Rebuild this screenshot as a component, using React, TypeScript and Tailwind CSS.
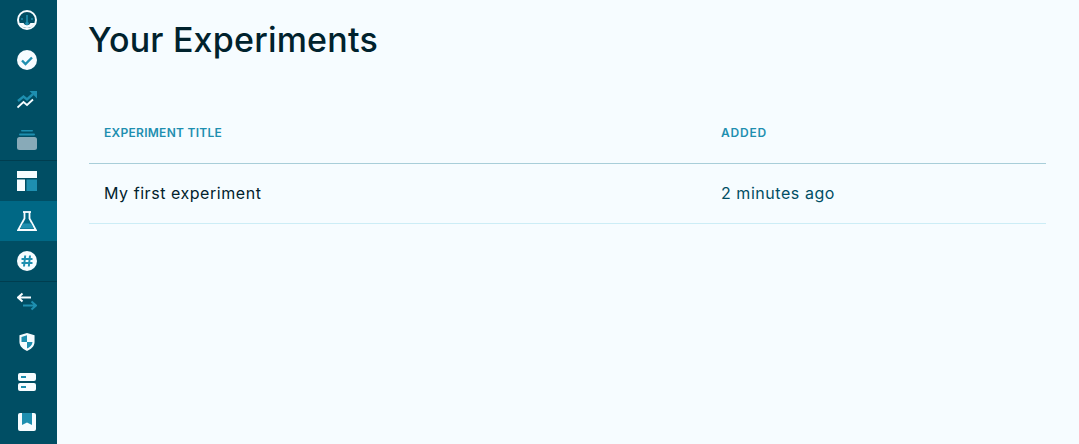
import type { ReactNode } from 'react';

const WHITE = '#f6fcff';
const BLUE = '#1e8fb0';

const icons: ReactNode[] = [
    <svg key="gauge" width="20" height="20" viewBox="0 0 20 20">
        <circle cx="10" cy="10" r="9" fill="none" stroke={WHITE} strokeWidth="2" />
        <path d="M2 13 H6.500 a3.800 3.800 0 0 0 7 0 H18 A9 9 0 0 1 2 13z" fill={WHITE} />
        <rect x="9.200" y="5" width="1.600" height="8" fill={BLUE} />
        <circle cx="10" cy="13.500" r="1.800" fill={BLUE} />
        <circle cx="5" cy="9" r="0.900" fill={BLUE} />
        <circle cx="15" cy="9" r="0.900" fill={BLUE} />
    </svg>,
    <svg key="check" width="20" height="20" viewBox="0 0 20 20">
        <circle cx="10" cy="10" r="10" fill={WHITE} />
        <path d="M5 10.500 8.500 14 15 7.500" fill="none" stroke={BLUE} strokeWidth="2.400" />
    </svg>,
    <svg key="trend" width="20" height="18" viewBox="0 0 20 18">
        <path d="M1 10 6.500 5.500 10 8.500 16 3" fill="none" stroke={BLUE} strokeWidth="2.400" />
        <path d="M12.500 0 H20 V7.500z" fill={BLUE} />
        <path d="M0.500 16.500 6.500 11 10 14 16 8.500" fill="none" stroke={WHITE} strokeWidth="1.800" />
    </svg>,
    <svg key="stack" width="20" height="20" viewBox="0 0 20 20">
        <rect x="4" y="0" width="12" height="1.500" rx="0.750" fill={BLUE} />
        <rect x="2" y="3.500" width="16" height="2" rx="1" fill={BLUE} />
        <rect x="0" y="7" width="20" height="13" rx="2.500" fill="#88aab8" />
    </svg>,
    <svg key="layout" width="20" height="20" viewBox="0 0 20 20">
        <rect width="20" height="7" fill={WHITE} />
        <rect y="8.500" width="8" height="11.500" fill={WHITE} />
        <rect x="9.500" y="8.500" width="10.500" height="11.500" fill={BLUE} />
    </svg>,
    <svg key="flask" width="20" height="20" viewBox="0 0 20 20">
        <path d="M6 1 H14" stroke={WHITE} strokeWidth="1.800" />
        <path d="M7.500 1 V7.500 L1.200 19 H18.800 L12.500 7.500 V1" fill="none" stroke={WHITE} strokeWidth="1.800" />
        <path d="M5.500 12.500 H14.500 L16.500 17.500 H3.500z" fill={BLUE} />
    </svg>,
    <svg key="hash" width="20" height="20" viewBox="0 0 20 20">
        <circle cx="10" cy="10" r="10" fill={WHITE} />
        <path d="M8.200 4.500 7 15.500 M13 4.500 11.800 15.500 M4.500 8 H15.500 M4.500 12 H15.500" fill="none" stroke={BLUE} strokeWidth="2" />
    </svg>,
    <svg key="arrows" width="20" height="20" viewBox="0 0 20 20">
        <path d="M1 5.500 H14 M5.500 1.500 1 5.500 5.500 9.500" fill="none" stroke={WHITE} strokeWidth="2" />
        <path d="M6 13.500 H19 M14.500 9.500 19 13.500 14.500 17.500" fill="none" stroke={BLUE} strokeWidth="2" />
    </svg>,
    <svg key="shield" width="16" height="20" viewBox="0 0 18 20">
        <path d="M9 0 L17.500 2.500 V10 C17.500 15 13 18.500 9 20 C5 18.500 0.500 15 0.500 10 V2.500z" fill={WHITE} />
        <path d="M9 2.500 V10 H2.800 V4.300z M9 10 H15.200 C15 13.500 12 16 9 17.400z" fill={BLUE} />
    </svg>,
    <svg key="server" width="18" height="18" viewBox="0 0 18 18">
        <rect width="18" height="8" rx="2" fill={WHITE} />
        <rect y="10" width="18" height="8" rx="2" fill={WHITE} />
        <rect x="3" y="3" width="5" height="2" fill={BLUE} />
        <rect x="3" y="13" width="5" height="2" fill={BLUE} />
    </svg>,
    <svg key="bookmark" width="18" height="18" viewBox="0 0 18 18">
        <rect width="18" height="18" rx="2" fill={WHITE} />
        <path d="M4 0 H14 V12 L9 9.500 L4 12z" fill={BLUE} />
    </svg>,
];

// Dividers sit above the 5th and 8th sidebar items
const DIVIDED = [4, 7];

export default function App() {
    return (
        <div className="flex h-[444px] w-[1079px] overflow-hidden bg-[#f6fcff] font-['Inter',sans-serif]">
            <nav className="flex w-[57px] shrink-0 flex-col bg-[#004e64]">
                {icons.map((icon, i) => (
                    <div
                        key={i}
                        className={`flex items-center justify-center pr-[3px] ${i === 5 ? 'bg-[#006885]' : ''} ${DIVIDED.includes(i) ? 'h-[41px] border-t border-[#003d4f]' : 'h-10'}`}
                    >
                        {icon}
                    </div>
                ))}
            </nav>

            <main className="flex-1 pl-8 pr-[33px]">
                <h1 className="-ml-px pt-4 text-[34px] leading-[48px] font-medium tracking-[0.2px] text-[#00222d]">Your Experiments</h1>

                <div className="mt-[38px]">
                    <div className="grid h-[62px] grid-cols-[617px_1fr] items-center border-b border-[#a8ced9] pl-[15px] pr-4 text-xs font-semibold tracking-[0.28px] text-[#1e8fb0]">
                        <span>EXPERIMENT TITLE</span>
                        <span className="tracking-[0.8px]">ADDED</span>
                    </div>
                    <div className="grid h-[60px] grid-cols-[617px_1fr] items-center border-b border-[#ccedf6] pb-0.5 pl-[15px] pr-4 text-base tracking-[0.55px]">
                        <span className="text-[#00222d]">My first experiment</span>
                        <span className="text-[#004e64]">2 minutes ago</span>
                    </div>
                </div>
            </main>
        </div>
    );
}
